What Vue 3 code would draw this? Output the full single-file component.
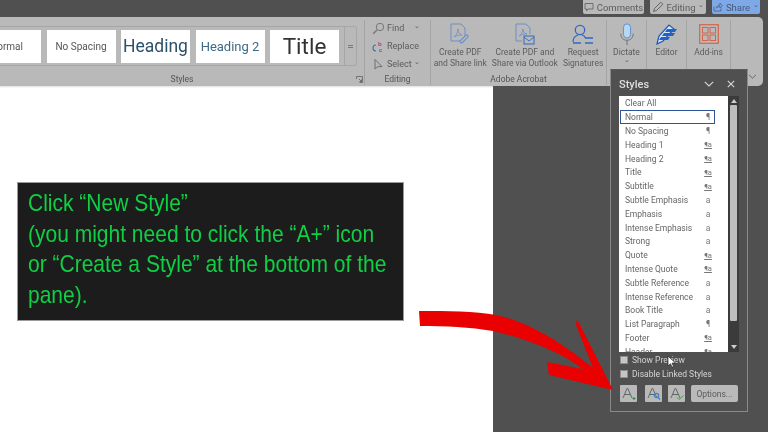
<template>
  <div class="screen">
    <div class="titlebar">
      <button class="top-btn comments">
        <svg width="10" height="10" viewBox="0 0 10 10" fill="none"><path d="M1 1.500h8v5.500H4L2.500 8.800V7H1z" stroke="#5c5c5c" stroke-width=".8"/></svg>
        Comments
      </button>
      <button class="top-btn editing">
        <svg width="12" height="12" viewBox="0 0 12 12" fill="none"><path d="M1.500 10.500l1-3L8.800 1.200l2 2L4.500 9.500z" stroke="#5c5c5c" stroke-width=".9"/></svg>
        Editing <span class="caret">⌄</span>
      </button>
      <button class="top-btn share">
        <svg width="10" height="10" viewBox="0 0 10 10" fill="none"><path d="M1 4.500v4.500h7V6.500M3.500 6c.3-2 1.800-3 3.500-3V1.200L9.500 3.800 7 6V4.500C5.500 4.500 4.300 5 3.500 6z" stroke="#4a5f80" stroke-width=".8"/></svg>
        Share <span class="caret">⌄</span>
      </button>
    </div>

    <div class="ribbon">
      <section class="group styles-group">
        <div class="group-body">
          <div class="gallery">
            <div v-for="s in galleryStyles" :key="s.name" class="gallery-item" :class="s.cls">{{ s.name }}</div>
            <div class="gallery-more">
              <span></span><span></span>
            </div>
          </div>
        </div>
        <div class="group-label">Styles</div>
        <svg class="launcher" width="7" height="7" viewBox="0 0 7 7" fill="none"><path d="M.5 3V.5H6.500V6.500H3.500M3 3l2.500 2.500M5.500 3.500v2H3.500" stroke="#555" stroke-width=".7"/></svg>
      </section>

      <section class="group editing-group">
        <div class="group-body edit-list">
          <div class="edit-row">
            <svg width="13" height="13" viewBox="0 0 13 13" fill="none"><circle cx="8" cy="5" r="3.700" stroke="#777" stroke-width="1"/><path d="M5 8L1.200 11.800" stroke="#777" stroke-width="1.400"/></svg>
            <span>Find</span><span class="caret find-caret">⌄</span>
          </div>
          <div class="edit-row">
            <svg width="13" height="13" viewBox="0 0 13 13" fill="none"><path d="M1 8a3 3 0 0 1 3-3M1 8a3 3 0 0 0 3 3" stroke="#3f70b0" stroke-width="1.100"/><text x="6" y="5.500" font-size="6" font-weight="700" fill="#b0328c" font-family="Liberation Sans, sans-serif">b</text><text x="7" y="12" font-size="6" font-weight="700" fill="#3f70b0" font-family="Liberation Sans, sans-serif">c</text></svg>
            <span>Replace</span>
          </div>
          <div class="edit-row">
            <svg width="13" height="13" viewBox="0 0 13 13" fill="none"><path d="M3 1.500v9.500l2.500-2.200 4.500-.3z" stroke="#666" stroke-width=".9"/></svg>
            <span>Select</span><span class="caret">⌄</span>
          </div>
        </div>
        <div class="group-label">Editing</div>
      </section>

      <section class="group acrobat-group">
        <div class="group-body acrobat-row">
          <div class="big-btn">
            <div class="icon-slot">
              <svg width="20" height="22" viewBox="0 0 20 22" fill="none"><path d="M1 1h10l4 4v8M1 1v17h9" stroke="#6c8fc4" stroke-width="1"/><path d="M4 14c2-1 4-5 4-8 0 3 1 5 4 6-2 0-5 0-8 2z" stroke="#6c8fc4" stroke-width=".8"/><path d="M12 20l6-6a1.500 1.500 0 0 0-2-2l-6 6a2 2 0 0 0 2 2z" stroke="#6c8fc4" stroke-width="1.100"/></svg>
            </div>
            <div class="big-label">Create PDF<br>and Share link</div>
          </div>
          <div class="big-btn">
            <div class="icon-slot">
              <svg width="20" height="22" viewBox="0 0 20 22" fill="none"><path d="M1 1h10l4 4v6M1 1v17h6" stroke="#6c8fc4" stroke-width="1"/><path d="M4 13c2-1 4-4 4-7 0 3 1 4 4 5-2 0-5 0-8 2z" stroke="#6c8fc4" stroke-width=".8"/><rect x="9" y="13" width="10" height="8" stroke="#3f72bd" stroke-width="1.100"/><path d="M9 14l5 4 5-4" stroke="#3f72bd" stroke-width="1"/></svg>
            </div>
            <div class="big-label">Create PDF and<br>Share via Outlook</div>
          </div>
          <div class="big-btn">
            <div class="icon-slot">
              <svg width="22" height="21" viewBox="0 0 22 21" fill="none"><circle cx="8" cy="6" r="4.700" stroke="#2f68c4" stroke-width="1.300"/><path d="M1 18c0-4 2-6 5-7M10 11c2 .6 3 1.500 3.500 3" stroke="#2f68c4" stroke-width="1.300"/><path d="M1 19h8M13 14h8M13 19h8" stroke="#2f68c4" stroke-width="1.300"/></svg>
            </div>
            <div class="big-label">Request<br>Signatures</div>
          </div>
        </div>
        <div class="group-label">Adobe Acrobat</div>
      </section>

      <section class="group big-btn dictate-group">
        <div class="icon-slot">
          <svg width="16" height="23" viewBox="0 0 18 26" fill="none"><rect x="5" y="1" width="8" height="16" rx="4" fill="#bcd5ee" stroke="#4d8fd1" stroke-width="1"/><path d="M2 12c0 5 3 7.500 7 7.500s7-2.500 7-7.500M9 20v5" stroke="#6e6e6e" stroke-width="1.100"/></svg>
        </div>
        <div class="big-label">Dictate</div>
        <span class="caret">⌄</span>
      </section>

      <section class="group big-btn editor-group">
        <div class="icon-slot">
          <svg width="22" height="22" viewBox="0 0 22 22" fill="none"><path d="M1 21L3 13 13 2l5 4L7 18z" fill="#d8e6f5" stroke="#1f55b0" stroke-width="1.200"/><path d="M11 6h10l-2 3H9zM8 10h11l-2 3H6zM5 14h9l-2 3H3z" fill="#1f62c8"/></svg>
        </div>
        <div class="big-label">Editor</div>
      </section>

      <section class="group big-btn addins-group">
        <div class="icon-slot">
          <svg width="20" height="20" viewBox="0 0 20 20" fill="none"><rect x=".7" y=".7" width="18.600" height="18.600" stroke="#d4664a" stroke-width="1.200"/><rect x="3.500" y="3.500" width="5.500" height="5.500" stroke="#d4664a" stroke-width="1"/><rect x="11" y="3.500" width="5.500" height="5.500" stroke="#d4664a" stroke-width="1"/><rect x="3.500" y="11" width="5.500" height="5.500" stroke="#d4664a" stroke-width="1"/><rect x="11" y="11" width="5.500" height="5.500" stroke="#d4664a" stroke-width="1"/></svg>
        </div>
        <div class="big-label">Add-ins</div>
      </section>

      <svg class="collapse" width="9" height="5" viewBox="0 0 9 5" fill="none"><path d="M1 .8l3.500 3.400L8 .8" stroke="#666" stroke-width="1"/></svg>
    </div>

    <div class="workspace">
      <div class="page"></div>
      <div class="page-side"></div>
    </div>

    <div class="callout">
      <div class="callout-text">
        Click “New Style”<br>
        (you might need to click the “A+” icon<br>
        or “Create a Style” at the bottom of the<br>
        pane).
      </div>
    </div>

    <aside class="pane">
      <header class="pane-head">
        <span class="pane-title">Styles</span>
        <svg width="10" height="6" viewBox="0 0 10 6" fill="none"><path d="M.8.8L5 5 9.200.8" stroke="#d8d8d8" stroke-width="1.100"/></svg>
        <svg width="8" height="8" viewBox="0 0 8 8" fill="none"><path d="M.8.8l6.400 6.400M7.200.8L.8 7.200" stroke="#d8d8d8" stroke-width="1.100"/></svg>
      </header>
      <div class="list-box">
        <ul class="style-list">
          <li v-for="item in paneStyles" :key="item.name" class="style-row" :class="{ selected: item.name === 'Normal' }">
            <span>{{ item.name }}</span>
            <span class="mark" :class="{ linked: item.mark === '¶a' }">{{ item.mark }}</span>
          </li>
        </ul>
        <div class="scrollbar">
          <span class="arrow-up"></span>
          <span class="thumb"></span>
          <span class="arrow-down"></span>
        </div>
      </div>
      <label class="check first"><span class="box"></span>Show Preview</label>
      <label class="check"><span class="box"></span>Disable Linked Styles</label>
      <div class="pane-actions">
        <button class="icon-btn">
          <svg width="14" height="13" viewBox="0 0 14 13" fill="none"><path d="M1 11L5 1.500h.8L10 11M2.600 7.500h5.800" stroke="#5e6a6a" stroke-width="1"/><path d="M10.500 11.500h3M12 10v3" stroke="#2f8a4a" stroke-width="1"/></svg>
        </button>
        <button class="icon-btn second">
          <svg width="14" height="13" viewBox="0 0 14 13" fill="none"><path d="M1 11L5 1.500h.8L10 11M2.600 7.500h5.800" stroke="#5e6a6a" stroke-width="1"/><circle cx="9.500" cy="8.500" r="2.200" stroke="#3f80c8" stroke-width="1.200"/><path d="M11 10.500l2 2" stroke="#3f80c8" stroke-width="1.200"/></svg>
        </button>
        <button class="icon-btn">
          <svg width="14" height="13" viewBox="0 0 14 13" fill="none"><path d="M1 11L5 1.500h.8L10 11M2.600 7.500h5.800" stroke="#5e6a6a" stroke-width="1"/><path d="M7 10.500l2 2 4.500-4" stroke="#4c9a5a" stroke-width="1"/></svg>
        </button>
        <button class="options-btn">Options...</button>
      </div>
    </aside>

    <svg class="cursor" width="9" height="13" viewBox="0 0 9 13"><path d="M1 1v10l2.500-2.300 1.500 3.500 1.600-.7-1.500-3.400H8.500z" fill="#fff" stroke="#222" stroke-width=".7"/></svg>

    <svg class="red-arrow" width="768" height="432" viewBox="0 0 768 432">
      <path d="M419 311C447 311 475 311 496 315C530 322 565 345 593 368L576 325L577 319L613 390L549 375L547 362L583 369C560 352 530 340 493 331C470 327 445 326 420 326Z" fill="#e90000"/>
    </svg>
  </div>
</template>

<script setup>
const galleryStyles = [
  { name: 'Normal', cls: 'g-normal' },
  { name: 'No Spacing', cls: 'g-nospace' },
  { name: 'Heading', cls: 'g-h1' },
  { name: 'Heading 2', cls: 'g-h2' },
  { name: 'Title', cls: 'g-title' }
]

const paneStyles = [
  { name: 'Clear All', mark: '' },
  { name: 'Normal', mark: '¶' },
  { name: 'No Spacing', mark: '¶' },
  { name: 'Heading 1', mark: '¶a' },
  { name: 'Heading 2', mark: '¶a' },
  { name: 'Title', mark: '¶a' },
  { name: 'Subtitle', mark: '¶a' },
  { name: 'Subtle Emphasis', mark: 'a' },
  { name: 'Emphasis', mark: 'a' },
  { name: 'Intense Emphasis', mark: 'a' },
  { name: 'Strong', mark: 'a' },
  { name: 'Quote', mark: '¶a' },
  { name: 'Intense Quote', mark: '¶a' },
  { name: 'Subtle Reference', mark: 'a' },
  { name: 'Intense Reference', mark: 'a' },
  { name: 'Book Title', mark: 'a' },
  { name: 'List Paragraph', mark: '¶' },
  { name: 'Footer', mark: '¶a' },
  { name: 'Header', mark: '¶a' }
]
</script>

<style>
html, body {
  margin: 0;
  background: #505050;
}
</style>

<style scoped>
.screen {
  position: relative;
  width: 768px;
  height: 432px;
  overflow: hidden;
  display: flex;
  flex-direction: column;
  background: #505050;
  font-family: Roboto, "Noto Sans", sans-serif;
  color: #5a5a5a;
  filter: blur(.35px);
}

.titlebar {
  height: 17px;
  flex: none;
  display: flex;
  justify-content: flex-end;
  gap: 6px;
  padding-right: 8px;
  box-sizing: border-box;
}

.top-btn {
  height: 14px;
  display: flex;
  align-items: center;
  justify-content: center;
  gap: 3px;
  padding: 0;
  border: none;
  border-radius: 0 0 2px 2px;
  background: #b9b9b9;
  font: inherit;
  font-size: 9.500px;
  color: #5c5c5c;
}

.comments { width: 61px; }
.editing { width: 56px; }
.share { width: 48px; background: #7ea9e6; color: #46597a; }

.caret {
  font-size: 7px;
  line-height: 7px;
  margin-top: -3px;
}

.ribbon {
  height: 69px;
  flex: none;
  margin-right: 5px;
  display: flex;
  background: #b9b9b9;
  border-radius: 0 5px 5px 0;
  position: relative;
  z-index: 1;
}

.group {
  position: relative;
  flex: none;
  box-sizing: border-box;
  display: flex;
  flex-direction: column;
  border-right: 1px solid #a4a4a4;
  margin: 3px 0 1px;
}

.group-body {
  flex: 1;
}

.group-label {
  height: 11px;
  text-align: center;
  font-size: 8.500px;
  line-height: 11px;
  color: #555;
}

.launcher {
  position: absolute;
  right: 1px;
  bottom: 2px;
}

.styles-group { width: 365px; }
.editing-group { width: 66px; }
.acrobat-group { width: 176px; }
.dictate-group { width: 40px; }
.editor-group { width: 40px; }
.addins-group { width: 44px; }

.gallery {
  width: 386px;
  height: 40px;
  margin: 6px 0 0 -29px;
  box-sizing: border-box;
  border: 1px solid #a6a6a6;
  border-radius: 3px;
  display: flex;
  align-items: center;
  gap: 5.500px;
}

.gallery-item {
  width: 69px;
  height: 33px;
  flex: none;
  background: #fff;
  display: flex;
  align-items: center;
  justify-content: center;
  white-space: nowrap;
}

.g-normal, .g-nospace { font-size: 10px; color: #555; }
.g-h1 { font-size: 17.500px; color: #2b5168; }
.g-h2 { font-size: 13px; color: #3d6a86; }
.g-title { font-size: 22.500px; color: #333; }

.gallery-more {
  align-self: stretch;
  flex: 1;
  margin-left: -1px;
  border-left: 1px solid #a6a6a6;
  display: flex;
  flex-direction: column;
  align-items: center;
  justify-content: center;
  gap: 1px;
}

.gallery-more span {
  width: 5px;
  height: 1px;
  background: #777;
}

.edit-list {
  padding: 1px 0 0 7px;
  display: flex;
  flex-direction: column;
  gap: 4px;
}

.edit-row {
  display: flex;
  align-items: center;
  gap: 2px;
  height: 14px;
  font-size: 9px;
  color: #5c5c5c;
}

.find-caret { margin-left: 8px; }

.acrobat-row {
  display: flex;
  justify-content: center;
  gap: 5px;
}

.big-btn {
  display: flex;
  flex-direction: column;
  align-items: center;
  gap: 2px;
  padding-top: 3px;
}

.icon-slot {
  height: 22px;
  display: flex;
  align-items: center;
  justify-content: center;
}

.big-label {
  font-size: 8.500px;
  line-height: 11px;
  text-align: center;
  white-space: nowrap;
  color: #5c5c5c;
}

.collapse {
  position: absolute;
  right: 6px;
  bottom: 7px;
}

.workspace {
  flex: 1;
  display: flex;
}

.page {
  width: 493px;
  background: #fff;
  box-shadow: inset 0 2px 2px -1px #ddd;
}

.page-side {
  flex: 1;
  background: #505050;
}

.callout {
  position: absolute;
  left: 17px;
  top: 182px;
  width: 387px;
  height: 139px;
  box-sizing: border-box;
  padding: 5px 0 0 10px;
  border: 1px solid #9a9a9a;
  background: #1c1c1c;
}

.callout-text {
  font-family: "Liberation Sans", Arial, sans-serif;
  font-size: 24px;
  line-height: 30.500px;
  color: #0fcf45;
  white-space: nowrap;
  transform: scaleX(.875);
  transform-origin: left top;
}

.pane {
  position: absolute;
  left: 610px;
  top: 69px;
  width: 138px;
  height: 343px;
  box-sizing: border-box;
  z-index: 2;
  border: 1px solid #8a8a8a;
  border-top-color: #5a5a5a;
  background: #505050;
  padding: 0 8px;
  display: flex;
  flex-direction: column;
}

.pane-head {
  height: 26px;
  flex: none;
  box-sizing: border-box;
  display: flex;
  align-items: center;
  gap: 13px;
  padding: 2px 4px 0 0;
  color: #e0e0e0;
}

.pane-title {
  flex: 1;
  font-size: 11px;
  font-weight: 500;
  color: #dedede;
}

.list-box {
  height: 256px;
  flex: none;
  display: flex;
  background: #fff;
  overflow: hidden;
}

.style-list {
  flex: 1;
  list-style: none;
  margin: 0;
  padding: .5px 0 0 1px;
}

.style-row {
  height: 13.800px;
  box-sizing: border-box;
  display: flex;
  align-items: center;
  justify-content: space-between;
  padding: 0 2px 0 5px;
  margin-right: 13px;
  font-size: 8.500px;
  color: #666;
  white-space: nowrap;
}

.selected {
  border: 1px solid #2f5597;
  padding: 0 1px 0 4px;
}

.mark {
  width: 10px;
  text-align: center;
  font-size: 8.500px;
  color: #777;
}

.linked {
  font-size: 7.500px;
  text-decoration: underline;
}

.scrollbar {
  width: 11px;
  flex: none;
  background: #3b3b3b;
  display: flex;
  flex-direction: column;
  align-items: center;
}

.arrow-up, .arrow-down {
  width: 0;
  height: 0;
  flex: none;
  border-left: 3px solid transparent;
  border-right: 3px solid transparent;
}

.arrow-up {
  border-bottom: 4px solid #ccc;
  margin-top: 3px;
}

.arrow-down {
  border-top: 4px solid #ccc;
  margin-bottom: 3px;
}

.thumb {
  width: 7px;
  height: 216px;
  margin: 2px 0 auto;
  background: #bdbdbd;
  border-radius: 1px;
}

.check {
  height: 14px;
  flex: none;
  display: flex;
  align-items: center;
  gap: 4px;
  font-size: 8.500px;
  color: #d4d4d4;
}

.first {
  margin-top: 1px;
}

.box {
  width: 8px;
  height: 8px;
  margin-left: 1px;
  background: #c6c6c6;
  border: 1px solid #8e8e8e;
  box-sizing: border-box;
}

.pane-actions {
  display: flex;
  align-items: center;
  gap: 6px;
  margin: 4px 0 0 1px;
}

.second {
  margin-left: 2px;
}

.icon-btn {
  width: 17px;
  height: 17px;
  padding: 0;
  border: none;
  border-radius: 1px;
  background: #b9b9b9;
  display: flex;
  align-items: center;
  justify-content: center;
}

.options-btn {
  width: 47px;
  height: 17px;
  padding: 0;
  border: none;
  border-radius: 2px;
  background: #b9b9b9;
  font: inherit;
  font-size: 8.500px;
  color: #5c5c5c;
}

.cursor {
  position: absolute;
  left: 667px;
  top: 355px;
  z-index: 3;
}

.red-arrow {
  position: absolute;
  left: 0;
  top: 0;
  z-index: 4;
  pointer-events: none;
}
</style>
